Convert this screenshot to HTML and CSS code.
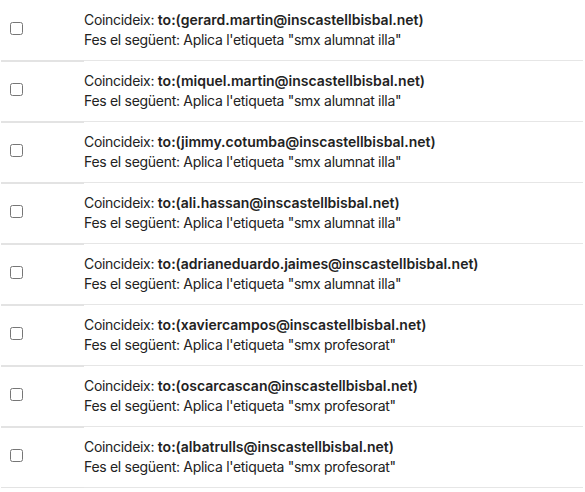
FILE: index.html
```html
<!DOCTYPE html>
<html lang="ca">
<head>
<meta charset="utf-8">
<title>Filtres</title>
<link rel="stylesheet" href="styles.css">
</head>
<body>
<div class="filters">
  <div class="row">
    <div class="check"><input type="checkbox" class="box"></div>
    <div class="desc">
      <div>Coincideix: <b>to:(gerard.martin@inscastellbisbal.net)</b></div>
      <div>Fes el següent: Aplica l'etiqueta "smx alumnat illa"</div>
    </div>
  </div>
  <div class="row">
    <div class="check"><input type="checkbox" class="box"></div>
    <div class="desc">
      <div>Coincideix: <b>to:(miquel.martin@inscastellbisbal.net)</b></div>
      <div>Fes el següent: Aplica l'etiqueta "smx alumnat illa"</div>
    </div>
  </div>
  <div class="row">
    <div class="check"><input type="checkbox" class="box"></div>
    <div class="desc">
      <div>Coincideix: <b>to:(jimmy.cotumba@inscastellbisbal.net)</b></div>
      <div>Fes el següent: Aplica l'etiqueta "smx alumnat illa"</div>
    </div>
  </div>
  <div class="row">
    <div class="check"><input type="checkbox" class="box"></div>
    <div class="desc">
      <div>Coincideix: <b>to:(ali.hassan@inscastellbisbal.net)</b></div>
      <div>Fes el següent: Aplica l'etiqueta "smx alumnat illa"</div>
    </div>
  </div>
  <div class="row">
    <div class="check"><input type="checkbox" class="box"></div>
    <div class="desc">
      <div>Coincideix: <b>to:(adrianeduardo.jaimes@inscastellbisbal.net)</b></div>
      <div>Fes el següent: Aplica l'etiqueta "smx alumnat illa"</div>
    </div>
  </div>
  <div class="row">
    <div class="check"><input type="checkbox" class="box"></div>
    <div class="desc">
      <div>Coincideix: <b>to:(xaviercampos@inscastellbisbal.net)</b></div>
      <div>Fes el següent: Aplica l'etiqueta "smx profesorat"</div>
    </div>
  </div>
  <div class="row">
    <div class="check"><input type="checkbox" class="box"></div>
    <div class="desc">
      <div>Coincideix: <b>to:(oscarcascan@inscastellbisbal.net)</b></div>
      <div>Fes el següent: Aplica l'etiqueta "smx profesorat"</div>
    </div>
  </div>
  <div class="row">
    <div class="check"><input type="checkbox" class="box"></div>
    <div class="desc">
      <div>Coincideix: <b>to:(albatrulls@inscastellbisbal.net)</b></div>
      <div>Fes el següent: Aplica l'etiqueta "smx profesorat"</div>
    </div>
  </div>
</div>
</body>
</html>
```
FILE: styles.css
```css
html, body {
  margin: 0;
  padding: 0;
  background: #fff;
}
body {
  font-family: Inter, "Noto Sans", sans-serif;
  font-size: 14px;
  color: #222;
}
.filters {
  padding: 0 2px 0 1px;
}
.row {
  display: flex;
  height: 61px;
}
.check {
  box-sizing: border-box;
  width: 83px;
  height: 62px;
  flex: none;
  padding: 22px 0 0 9px;
  border-bottom: 2px solid #e3e3e3;
}
.box {
  margin: 0;
  width: 13px;
  height: 13px;
  display: block;
}
.desc {
  box-sizing: border-box;
  flex: 1;
  height: 61px;
  padding: 10px 0 0 0;
  line-height: 20px;
  letter-spacing: -0.3px;
  border-bottom: 1px solid #e6e6e6;
  white-space: nowrap;
}
.desc b {
  font-weight: 600;
  letter-spacing: 0;
}
```
